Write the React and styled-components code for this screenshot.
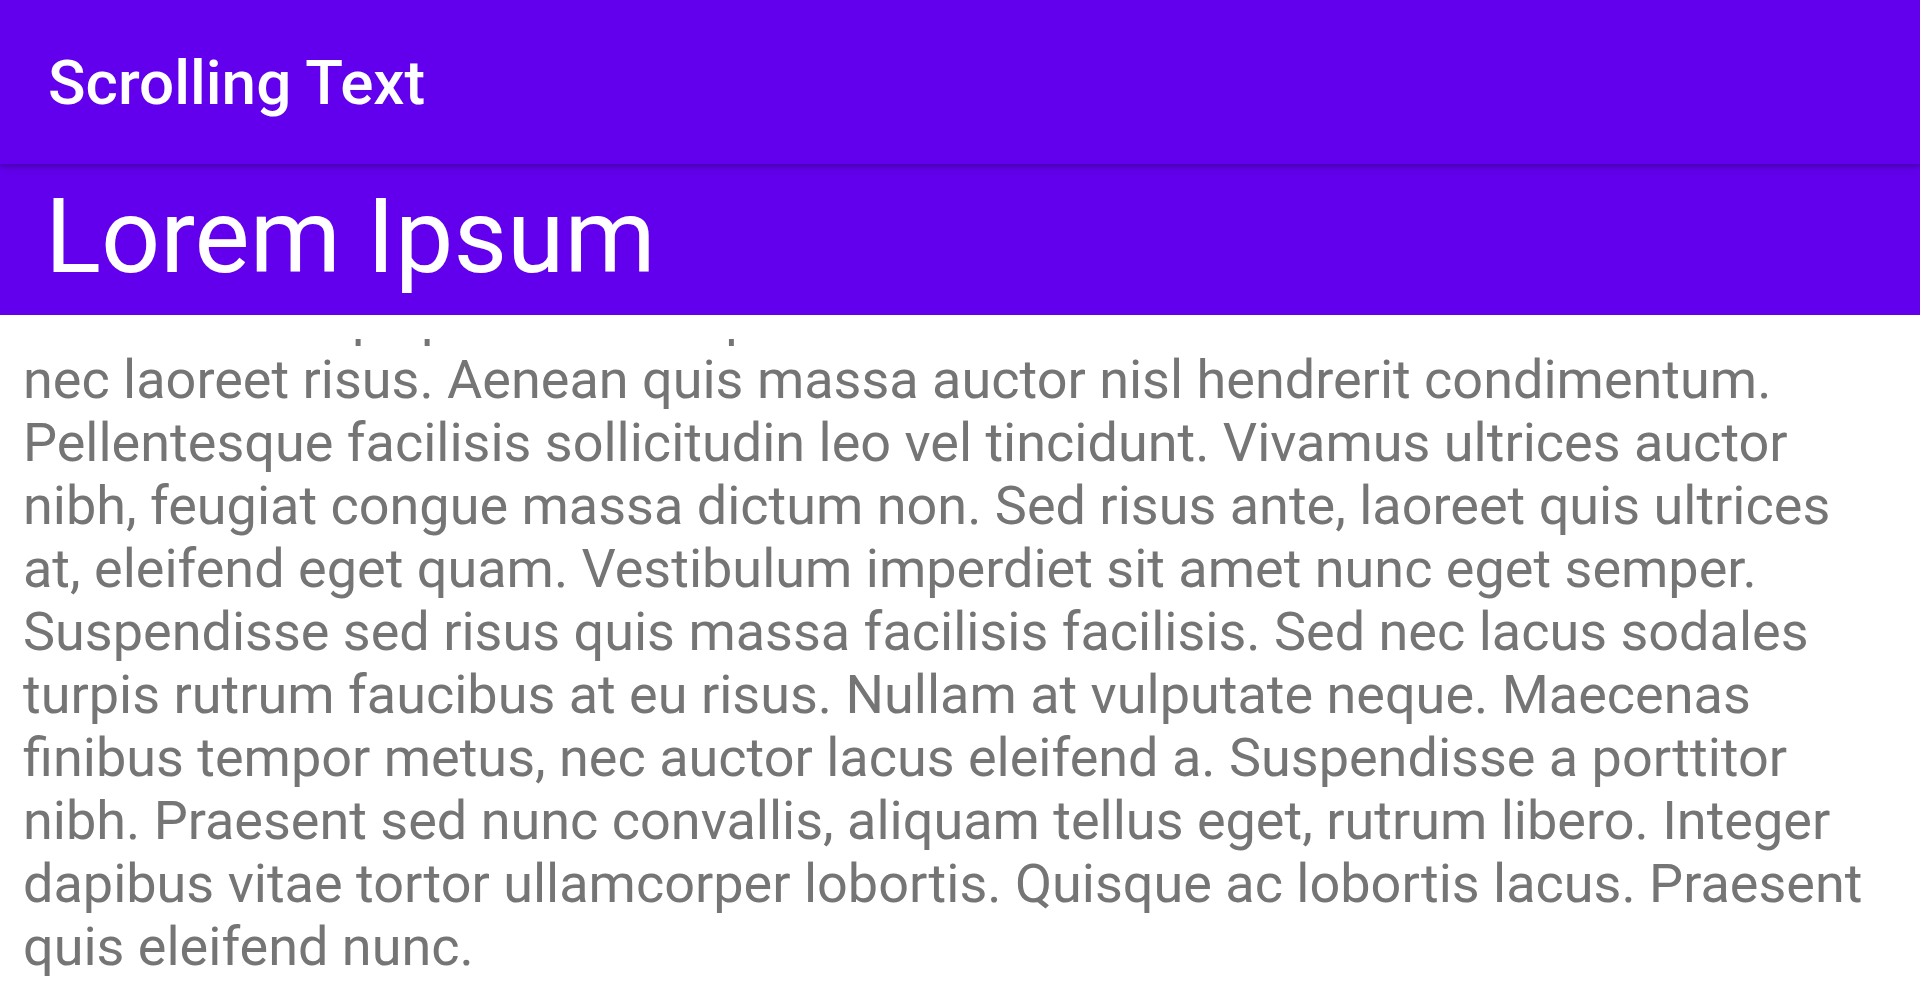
import React from "react";
import styled, { createGlobalStyle } from "styled-components";

const Global = createGlobalStyle`
  html, body { margin: 0; padding: 0; background: #ffffff; }
  body { font-family: Roboto, "Noto Sans", "Liberation Sans", sans-serif; overflow: hidden; }
  #root { height: 100vh; }
`;

const Screen = styled.div`
  height: 100vh;
  display: flex;
  flex-direction: column;
  background: #ffffff;
`;

const Toolbar = styled.header`
  position: relative;
  z-index: 2;
  height: 164px;
  flex: none;
  display: flex;
  align-items: center;
  padding-left: 48px;
  background: #6200ee;
  box-shadow: 0 2px 4px rgba(0, 0, 0, 0.2), 0 4px 10px rgba(0, 0, 0, 0.12);
`;

const ToolbarTitle = styled.h1`
  margin: 0;
  font-size: 62px;
  font-weight: 500;
  line-height: normal;
  color: #ffffff;
`;

const Banner = styled.div`
  position: relative;
  z-index: 1;
  height: 151px;
  flex: none;
  box-sizing: border-box;
  padding: 12px 0 0 45px;
  background: #6200ee;
`;

const BannerTitle = styled.h2`
  margin: 0;
  font-size: 104px;
  font-weight: 400;
  line-height: normal;
  color: #ffffff;
`;

const Scroller = styled.main`
  flex: 1;
  min-height: 0;
  display: flex;
  flex-direction: column;
  padding-top: 24px;
`;

const Viewport = styled.div`
  flex: 1;
  min-height: 0;
  overflow: hidden;
`;

const Article = styled.p`
  margin: ${(p) => p.$offset}px 0 0 0;
  padding: 0 12px 0 23px;
  font-size: 54px;
  line-height: 63px;
  color: #757575;
  white-space: pre-line;
`;

const lines = [
  "Sed erat nec qui pretium erat porta elit sed venenatis arcu ac mollis elit nisi ut",
  "nec laoreet risus. Aenean quis massa auctor nisl hendrerit condimentum.",
  "Pellentesque facilisis sollicitudin leo vel tincidunt. Vivamus ultrices auctor",
  "nibh, feugiat congue massa dictum non. Sed risus ante, laoreet quis ultrices",
  "at, eleifend eget quam. Vestibulum imperdiet sit amet nunc eget semper.",
  "Suspendisse sed risus quis massa facilisis facilisis. Sed nec lacus sodales",
  "turpis rutrum faucibus at eu risus. Nullam at vulputate neque. Maecenas",
  "finibus tempor metus, nec auctor lacus eleifend a. Suspendisse a porttitor",
  "nibh. Praesent sed nunc convallis, aliquam tellus eget, rutrum libero. Integer",
  "dapibus vitae tortor ullamcorper lobortis. Quisque ac lobortis lacus. Praesent",
  "quis eleifend nunc.",
];

export default function App() {
  return (
    <>
      <Global />
      <Screen>
        <Toolbar>
          <ToolbarTitle>Scrolling Text</ToolbarTitle>
        </Toolbar>
        <Banner>
          <BannerTitle>Lorem Ipsum</BannerTitle>
        </Banner>
        <Scroller>
          <Viewport>
            <Article $offset={-54}>{lines.join("\n")}</Article>
          </Viewport>
        </Scroller>
      </Screen>
    </>
  );
}
